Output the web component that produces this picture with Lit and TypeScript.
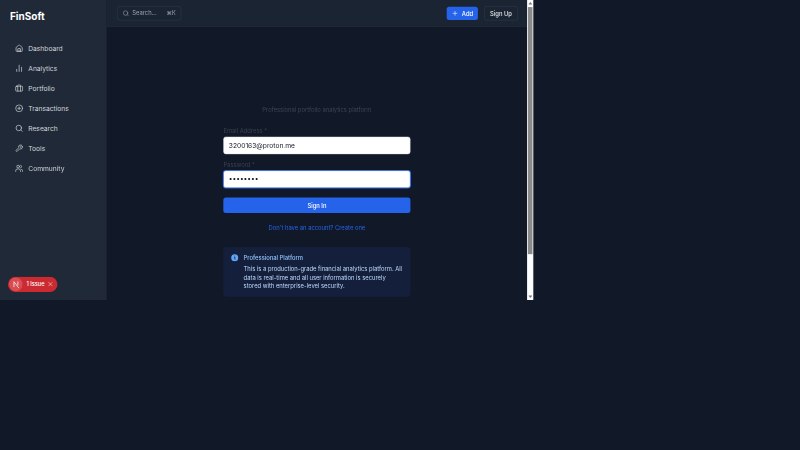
import { LitElement, html, css, svg } from "lit";
import { customElement } from "lit/decorators.js";

const icons = {
  home: svg`<path d="M3 10.5a2 2 0 0 1 .7-1.5l7-6a2 2 0 0 1 2.6 0l7 6a2 2 0 0 1 .7 1.5V19a2 2 0 0 1-2 2H5a2 2 0 0 1-2-2z"/><path d="M8 21v-7a1.5 1.5 0 0 1 1.500-1.500h5A1.500 1.500 0 0 1 16 14v7M12 17v4"/>`,
  chart: svg`<path d="M5 21v-6M12 21V3M19 21V9"/>`,
  briefcase: svg`<rect x="2" y="6" width="20" height="14" rx="2"/><path d="M8 20V4a2 2 0 0 1 2-2h4a2 2 0 0 1 2 2v16"/>`,
  plusCircle: svg`<circle cx="12" cy="12" r="10"/><path d="M8 12h8M12 8v8"/>`,
  search: svg`<circle cx="11" cy="11" r="8"/><path d="m21 21-4.300-4.300"/>`,
  wrench: svg`<path d="M14.7 6.300a1 1 0 0 0 0 1.400l1.600 1.600a1 1 0 0 0 1.400 0l3.770-3.770a6 6 0 0 1-7.940 7.940l-6.910 6.910a2.120 2.120 0 0 1-3-3l6.910-6.910a6 6 0 0 1 7.940-7.940z"/>`,
  users: svg`<path d="M2 21v-2a5 5 0 0 1 5-5h4a5 5 0 0 1 5 5v2"/><circle cx="9" cy="7" r="4"/><path d="M16 3.100a4 4 0 0 1 0 7.800M22 21v-2a4 4 0 0 0-3-3.870"/>`,
  plus: svg`<path d="M5 12h14M12 5v14"/>`,
  close: svg`<path d="M5 5l14 14M19 5L5 19"/>`,
};

const icon = (name: keyof typeof icons, cls = "") =>
  html`<svg class="icon ${cls}" viewBox="0 0 24 24">${icons[name]}</svg>`;

const nav: [keyof typeof icons, string][] = [
  ["home", "Dashboard"],
  ["chart", "Analytics"],
  ["briefcase", "Portfolio"],
  ["plusCircle", "Transactions"],
  ["search", "Research"],
  ["wrench", "Tools"],
  ["users", "Community"],
];

@customElement("app-root")
export class AppRoot extends LitElement {
  static styles = css`
    :host {
      display: block;
      height: 450px;
      overflow: hidden;
      background: #111827;
      font-family: Inter, sans-serif;
      font-size: 6.67px;
    }
    * { box-sizing: border-box; }
    /* Laid out at 1280x720 and scaled down, so that small text keeps fractional positions. */
    .window {
      position: relative; display: flex; width: 533.4px; height: 300px; overflow: hidden;
      zoom: 2.4; transform: scale(0.416667); transform-origin: 0 0;
    }
    .icon {
      width: 8.3px; height: 8.3px; flex: none;
      fill: none; stroke: currentColor; stroke-width: 2;
      stroke-linecap: round; stroke-linejoin: round;
    }
    .side { width: 106.7px; flex: none; background: #1f2937; color: #d1d5db; }
    .logo { height: 38px; padding: 11.300px 10px 0; font-size: 10px; line-height: 12px; font-weight: 700; color: #fff; }
    .item { display: flex; align-items: center; height: 20px; padding: 0.400px 0 0 15px; gap: 5px; }
    .item span { padding-top: 0.500px; }
    .main { flex: 1; display: flex; flex-direction: column; min-width: 0; }
    .top {
      display: flex; align-items: center; flex: none; height: 27px; padding: 0 9.200px 0 10.200px;
      background: #1a2433; border-bottom: 0.420px solid #253040;
    }
    .search {
      display: flex; align-items: center; width: 64.200px; height: 14.500px; padding: 0 5px;
      border: 0.420px solid #374151; border-radius: 3px; color: #9ca3af; font-size: 5.830px;
    }
    .search .icon { width: 6.700px; height: 6.700px; margin-right: 3.300px; }
    .keys { margin-left: auto; font-family: Inter, "DejaVu Sans", sans-serif; font-size: 5.500px; }
    .btn { display: flex; align-items: center; justify-content: center; font-size: 5.830px; font-weight: 500; border-radius: 2.500px; color: #fff; }
    .add { width: 31.300px; height: 13.300px; margin-left: auto; gap: 3.300px; background: #2563eb; }
    .add .icon { width: 6.700px; height: 6.700px; }
    .up { width: 33.700px; height: 14.300px; margin-left: 6px; border: 0.420px solid #374151; color: #e5e7eb; }
    .up, .add, .submit { padding-top: 0.300px; }
    .form { width: 187px; margin-left: 116.700px; padding-top: 77.600px; font-size: 5.830px; }
    .tag { height: 21.900px; line-height: 10px; text-align: center; color: #3b4553; }
    .label { height: 10px; line-height: 8.300px; color: #374151; }
    .field {
      display: flex; align-items: center; height: 17.500px; padding: 0 5px 0.900px; margin-bottom: 6.500px;
      background: #fff; border: 0.420px solid #d1d5db; border-radius: 2.500px;
      color: #111827; font-size: 6.670px;
    }
    .focus { border-color: #2563eb; box-shadow: 0 0 0 0.500px #2563eb; margin-bottom: 9.400px; }
    .dots { letter-spacing: -0.050px; }
    .submit { height: 15.700px; background: #2563eb; }
    .alt { height: 34px; padding-top: 10.600px; line-height: 9px; text-align: center; color: #2563eb; }
    .info {
      display: flex; height: 49.500px; padding: 5.700px 6px 0 7px; gap: 5px;
      background: #141f3b; border: 0.420px solid #162443; border-radius: 3px;
      color: #bfdbfe; line-height: 8.330px; white-space: nowrap;
    }
    .info .badge { width: 7.800px; height: 7.800px; flex: none; margin-top: 0.500px; }
    .title { font-weight: 500; color: #93c5fd; margin-bottom: 3.300px; }
    .bar { width: 6.400px; flex: none; display: flex; flex-direction: column; align-items: center; background: #fcfcfc; }
    .arrow { width: 4px; height: 7px; fill: #777; }
    .thumb { width: 4.400px; height: 247px; background: #8b8b8b; }
    .bar .arrow:last-child { margin-top: auto; }
    .toast {
      position: absolute; left: 8px; top: 276.700px; width: 49.500px; height: 15.300px;
      display: flex; align-items: center; padding-left: 1px; border-radius: 8px;
      background: #ca2a30; color: #fff; font-size: 5.600px; font-weight: 500;
    }
    .mark { width: 13.500px; height: 13.500px; margin-right: 4px; border-radius: 50%; background: #d84d52; }
    .toast .icon { width: 5.800px; height: 5.800px; margin-left: 3px; }
  `;

  render() {
    return html`
      <div class="window">
        <nav class="side">
          <div class="logo">FinSoft</div>
          ${nav.map(([name, label]) => html`<div class="item">${icon(name)}<span>${label}</span></div>`)}
        </nav>
        <main class="main">
          <header class="top">
            <div class="search">${icon("search")}<span>Search...</span><span class="keys">⌘K</span></div>
            <div class="btn add">${icon("plus")}<span>Add</span></div>
            <div class="btn up">Sign Up</div>
          </header>
          <section class="form">
            <div class="tag">Professional portfolio analytics platform</div>
            <div class="label">Email Address *</div>
            <div class="field">3200163@proton.me</div>
            <div class="label">Password *</div>
            <div class="field focus"><span class="dots">••••••••</span></div>
            <div class="btn submit">Sign In</div>
            <div class="alt">Don't have an account? Create one</div>
            <div class="info">
              <svg class="badge" viewBox="0 0 20 20">
                <circle cx="10" cy="10" r="9" fill="#60a5fa" />
                <path d="M8 9.500h2.500V15M10 5v2" fill="none" stroke="#141f3b" stroke-width="2" />
              </svg>
              <div>
                <div class="title">Professional Platform</div>
                <div>This is a production-grade financial analytics platform. All<br />data is real-time and all user information is securely<br />stored with enterprise-level security.</div>
              </div>
            </div>
          </section>
        </main>
        <div class="bar">
          <svg class="arrow" viewBox="0 0 8 14"><path d="M0 9l4-5 4 5z" /></svg>
          <div class="thumb"></div>
          <svg class="arrow" viewBox="0 0 8 14"><path d="M0 5l4 5 4-5z" /></svg>
        </div>
        <div class="toast">
          <svg class="mark" viewBox="0 0 24 24"><path d="M8.500 17V7.500L17 18.500M15.500 7v7" fill="none" stroke="#fff" stroke-width="1.300" /></svg>
          <span>1 Issue</span>${icon("close")}
        </div>
      </div>
    `;
  }
}
